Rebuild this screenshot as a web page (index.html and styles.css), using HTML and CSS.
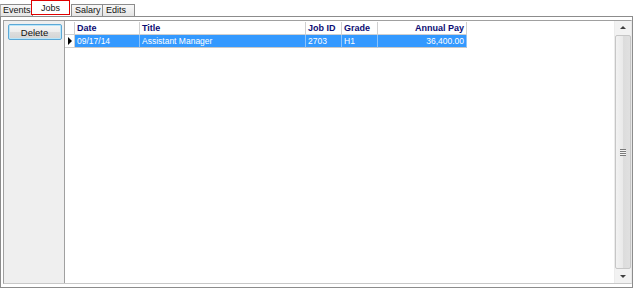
FILE: index.html
```html
<!DOCTYPE html>
<html>
<head>
<meta charset="utf-8">
<link rel="stylesheet" href="styles.css">
</head>
<body>
<div class="app">
  <div class="tabs">
    <div class="tab tab-events">Events</div>
    <div class="tab tab-jobs active">Jobs</div>
    <div class="tab tab-salary">Salary</div>
    <div class="tab tab-edits">Edits</div>
  </div>
  <div class="page">
    <div class="frame">
      <div class="side">
        <button class="btn">Delete</button>
      </div>
      <div class="grid">
        <div class="table">
          <div class="row head">
            <div class="cell ind"></div>
            <div class="cell c-date">Date</div>
            <div class="cell c-title">Title</div>
            <div class="cell c-id">Job ID</div>
            <div class="cell c-grade">Grade</div>
            <div class="cell c-pay num">Annual Pay</div>
          </div>
          <div class="row sel">
            <div class="cell ind"><span class="arrow"></span></div>
            <div class="cell c-date">09/17/14</div>
            <div class="cell c-title">Assistant Manager</div>
            <div class="cell c-id">2703</div>
            <div class="cell c-grade">H1</div>
            <div class="cell c-pay num">36,400.00</div>
          </div>
        </div>
        <div class="vscroll">
          <div class="sbtn up"><span class="tri-up"></span></div>
          <div class="track">
            <div class="thumb"><span class="grip"></span></div>
          </div>
          <div class="sbtn down"><span class="tri-down"></span></div>
        </div>
      </div>
    </div>
  </div>
</div>
</body>
</html>
```

FILE: styles.css
```css
html, body {
  margin: 0;
  padding: 0;
  background: #ffffff;
}
body {
  width: 633px;
  height: 289px;
  overflow: hidden;
  font-family: "Liberation Sans", Arial, sans-serif;
  font-size: 8.5px;
  color: #000;
}
.app {
  width: 633px;
  height: 289px;
  display: flex;
  flex-direction: column;
}
.tabs {
  height: 16px;
  display: flex;
  align-items: flex-end;
  position: relative;
  z-index: 2;
}
.tab {
  box-sizing: border-box;
  height: 12px;
  line-height: 11px;
  border: 1px solid #8c8c8c;
  border-bottom: none;
  background: linear-gradient(#f8f8f8, #e4e4e4);
  padding: 0 0 0 3px;
  color: #111;
  font-size: 9px;
  overflow: hidden;
  white-space: nowrap;
}
.tab-events {
  width: 33px;
  padding-left: 2px;
  border-left-color: #b0b0b0;
  margin-right: -2px;
}
.tab-jobs {
  position: relative;
  z-index: 3;
  width: 39px;
  height: 15px;
  line-height: 15px;
  background: #ffffff;
  border: 1px solid #e00000;
  padding: 0;
  text-align: center;
  margin-bottom: 1px;
}
.tab-salary { width: 32px; margin-left: 1px; }
.tab-edits { width: 33px; margin-left: -1px; }
.page {
  flex: 1;
  border: 1px solid #8c8c8c;
  margin-bottom: 1px;
  background: #ffffff;
  padding: 3px 0 3px 2px;
  display: flex;
}
.frame {
  flex: 1;
  display: flex;
  border: 1px solid #a0a0a0;
  border-right-color: #e8e8e8;
  border-bottom-color: #c8c8c8;
}
.side {
  width: 59px;
  background: #efefef;
  border-right: 1px solid #a0a0a0;
  padding-top: 3px;
  padding-left: 1px;
  display: flex;
  justify-content: center;
  align-items: flex-start;
}
.btn {
  width: 54px;
  height: 16px;
  font-family: "Liberation Sans", Arial, sans-serif;
  font-size: 9.5px;
  color: #111;
  border: 1px solid #5da8d6;
  border-radius: 2px;
  background: linear-gradient(#f7f7f7, #ececec 50%, #dedede 51%, #d4d4d4);
  box-shadow: inset 0 0 0 1px #b9e6fa;
  padding: 0;
  line-height: 13px;
}
.grid {
  flex: 1;
  display: flex;
  background: #fff;
  padding-top: 1px;
}
.table {
  flex: 1;
}
.row {
  display: flex;
  height: 13px;
}
.cell {
  box-sizing: border-box;
  height: 13px;
  line-height: 13px;
  padding: 0 2px;
  white-space: nowrap;
  overflow: hidden;
}
.head .cell {
  font-weight: bold;
  font-size: 9px;
  color: #0c0c73;
  background: #ffffff;
  border-right: 1px solid #d0d0d0;
  border-bottom: 1px solid #d0d0d0;
}
.sel .cell {
  background: #3399ff;
  color: #ffffff;
  border-right: 1px solid #8cc3fb;
  border-bottom: 1px solid #c8c8c8;
}
.sel .ind {
  background: #ffffff;
  border-right: 1px solid #d0d0d0;
  border-bottom: 1px solid #d0d0d0;
  display: flex;
  align-items: center;
  padding-left: 3px;
}
.arrow {
  width: 0;
  height: 0;
  border-top: 4px solid transparent;
  border-bottom: 4px solid transparent;
  border-left: 4px solid #000;
}
.ind { width: 10px; padding: 0; }
.c-date { width: 65px; }
.c-title { width: 166px; }
.c-id { width: 36px; }
.c-grade { width: 36px; }
.c-pay { width: 89px; }
.num { text-align: right; }
.vscroll {
  width: 16px;
  display: flex;
  flex-direction: column;
  background: #f2f2f2;
  border-left: 1px solid #ececec;
  margin-top: -1px;
}
.sbtn {
  height: 13px;
  display: flex;
  align-items: center;
  justify-content: center;
}
.tri-up {
  width: 0; height: 0;
  border-left: 3px solid transparent;
  border-right: 3px solid transparent;
  border-bottom: 3px solid #404040;
}
.tri-down {
  width: 0; height: 0;
  border-left: 3px solid transparent;
  border-right: 3px solid transparent;
  border-top: 3px solid #404040;
}
.track {
  flex: 1;
  display: flex;
}
.thumb {
  flex: 1;
  margin: 1px 0;
  border: 1px solid #c6c6c6;
  border-radius: 2px;
  background: linear-gradient(90deg, #f2f2f2, #e9e9e9 50%, #dcdcdc 51%, #e0e0e0);
  display: flex;
  align-items: center;
  justify-content: center;
}
.grip {
  width: 6px;
  height: 7px;
  background: repeating-linear-gradient(#7a7a7a 0 1px, #f4f4f4 1px 2px);
}
```
